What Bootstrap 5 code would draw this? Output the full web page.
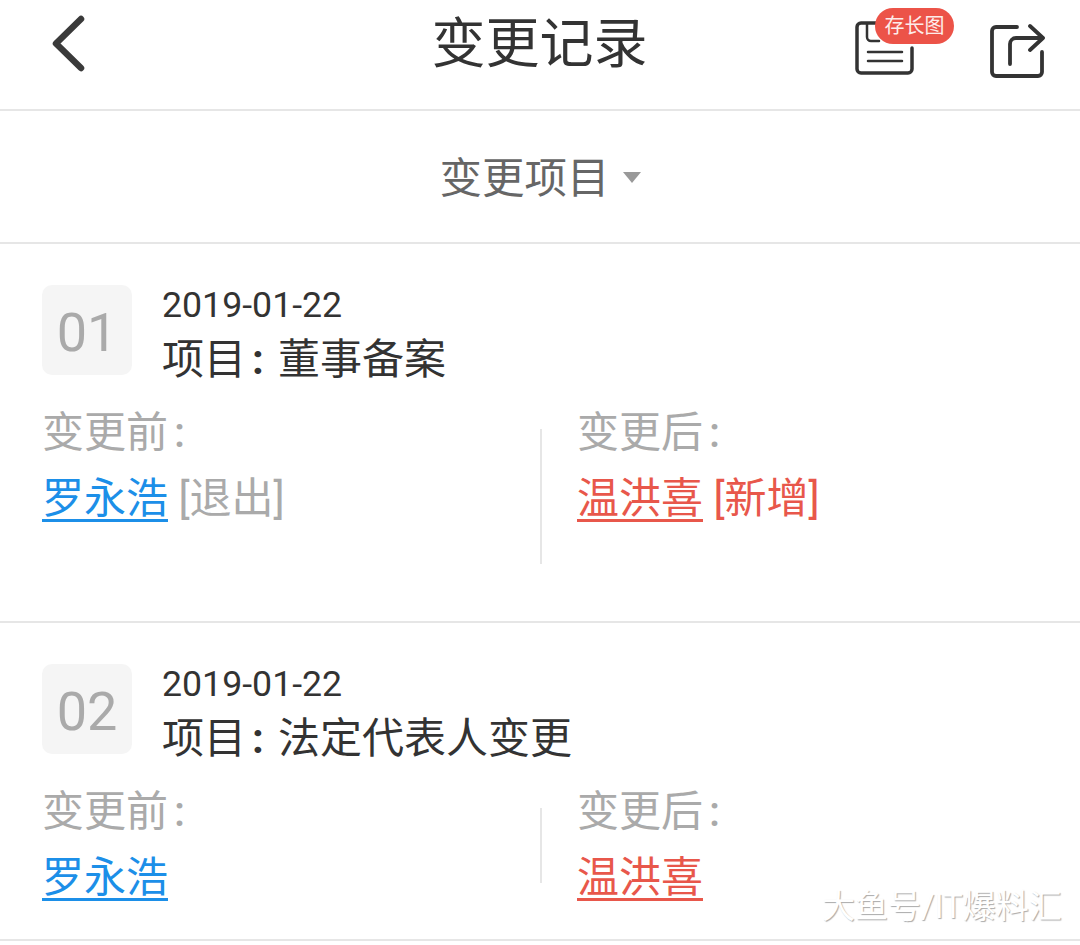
<!DOCTYPE html>
<html lang="zh">
<head>
<meta charset="utf-8">
<title>变更记录</title>
<link rel="stylesheet" href="https://cdn.jsdelivr.net/npm/bootstrap@5.3.0/dist/css/bootstrap.min.css">
<style>
html,body{height:945px;overflow:hidden;background:#fff}
body{font-family:Roboto,"Noto Sans CJK SC",sans-serif;color:#333;position:relative}
.top-bar{height:111px;border-bottom:2px solid #e6e6e6;padding:0 35px 0 50px}
.top-title{font-size:54px;line-height:1;color:#333;margin:0;font-weight:400;position:absolute;left:431.5px;top:18px}
.back-ic{width:40px;height:60px;margin-top:14px}
.right-group{margin-top:8px;gap:34px}
.save-wrap{position:relative;width:100px;height:72px}
.save-ic{position:absolute;left:0;top:12px;width:62px;height:60px}
.save-tag{position:absolute;left:20px;top:0;width:79px;height:36px;border-radius:18px;background:#ec5348;color:#fdecea;font-size:20px;line-height:36px;text-align:center}
.share-ic{width:56px;height:58px;margin-top:15px}
.filter-row{height:133px;border-bottom:2px solid #e6e6e6;font-size:42.5px;color:#666;padding:4px 0 0 0}
.caret-mark{width:0;height:0;border-left:9px solid transparent;border-right:9px solid transparent;border-top:11px solid #999;margin-left:13px;margin-top:-2px}
.rec{border-bottom:2px solid #e6e6e6;padding:41px 0 0 42px}
.rec-a{height:379px}
.rec-b{height:318px}
.rec-top{height:90px}
.num-box{width:90px;height:90px;border-radius:10px;background:#f5f5f5;color:#aaa;font-size:54px;line-height:95px;text-align:center;flex:none}
.rec-head{margin-left:30px;margin-top:-1px}
.rec-date{font-size:35.7px;line-height:42px;color:#333}
.rec-name{font-size:42px;line-height:56px;color:#333;margin-top:6px;white-space:nowrap}
.col-mark{display:inline-block;width:32px;padding-left:6px;font-weight:700}
.cap-dot{padding-left:6px;font-weight:500}
.two-cols{margin-top:54px;font-size:42px}
.side-l{width:498px;flex:none}
.side-r{padding-left:35px;border-left:2px solid #e6e6e6}
.rec-a .side-r{height:135px}
.rec-b .side-r{height:75px}
.cap{color:#aaa;line-height:52px;margin-top:-22px}
.who{line-height:56px;margin-top:12px;white-space:nowrap}
.who a{text-decoration:none;border-bottom:3px solid currentColor;display:inline-block;line-height:40px}
.who-b a{color:#1c8fe8}
.who-r a{color:#e8574b}
.tag-g{color:#aaa}
.tag-r{color:#e8574b}
.wm{position:absolute;left:822px;top:889px;font-size:33px;line-height:36px;color:#fff;text-shadow:1px 1px 1px #aaa;white-space:nowrap}
</style>
</head>
<body>
<header class="top-bar d-flex align-items-start justify-content-between">
  <svg class="back-ic" viewBox="50 13 40 60" fill="none" stroke="#3a3a3a" stroke-width="6.5" stroke-linecap="round" stroke-linejoin="round"><path d="M81 18 56 42.5 81 67"/></svg>
  <h1 class="top-title">变更记录</h1>
  <div class="right-group d-flex align-items-start">
    <div class="save-wrap">
      <svg class="save-ic" viewBox="855 20 62 60" fill="none" stroke="#333" stroke-width="3.5" stroke-linecap="round"><path d="M877 23H861a4 4 0 0 0-4 4v42a4 4 0 0 0 4 4h47a4 4 0 0 0 4-4V48"/><path d="M867 24v13a4 4 0 0 0 4 4h8" stroke-width="2.5"/><path d="M868 52h34M868 61h34" stroke-width="2.5"/></svg>
      <span class="save-tag">存长图</span>
    </div>
    <svg class="share-ic" viewBox="989 23 56 58" fill="none" stroke="#333" stroke-width="3.8" stroke-linecap="round" stroke-linejoin="round"><path d="M1017 27h-21a4 4 0 0 0-4 4v41a4 4 0 0 0 4 4h42a4 4 0 0 0 4-4V52"/><path d="M1010 64V44a6 6 0 0 1 6-6h26"/><path d="M1030 26l13 12-13 12"/></svg>
  </div>
</header>
<div class="filter-row d-flex align-items-center justify-content-center">
  <span>变更项目</span><span class="caret-mark"></span>
</div>
<section class="rec rec-a">
  <div class="rec-top d-flex">
    <div class="num-box">01</div>
    <div class="rec-head">
      <div class="rec-date">2019-01-22</div>
      <div class="rec-name">项目<span class="col-mark">:</span>董事备案</div>
    </div>
  </div>
  <div class="two-cols d-flex">
    <div class="side-l">
      <div class="cap">变更前<span class="cap-dot">:</span></div>
      <div class="who who-b"><a href="#">罗永浩</a> <span class="tag-g">[退出]</span></div>
    </div>
    <div class="side-r">
      <div class="cap">变更后<span class="cap-dot">:</span></div>
      <div class="who who-r"><a href="#">温洪喜</a> <span class="tag-r">[新增]</span></div>
    </div>
  </div>
</section>
<section class="rec rec-b">
  <div class="rec-top d-flex">
    <div class="num-box">02</div>
    <div class="rec-head">
      <div class="rec-date">2019-01-22</div>
      <div class="rec-name">项目<span class="col-mark">:</span>法定代表人变更</div>
    </div>
  </div>
  <div class="two-cols d-flex">
    <div class="side-l">
      <div class="cap">变更前<span class="cap-dot">:</span></div>
      <div class="who who-b"><a href="#">罗永浩</a></div>
    </div>
    <div class="side-r">
      <div class="cap">变更后<span class="cap-dot">:</span></div>
      <div class="who who-r"><a href="#">温洪喜</a></div>
    </div>
  </div>
</section>
<div class="wm">大鱼号/IT爆料汇</div>
<script src="https://cdn.jsdelivr.net/npm/bootstrap@5.3.0/dist/js/bootstrap.bundle.min.js"></script>
</body>
</html>
